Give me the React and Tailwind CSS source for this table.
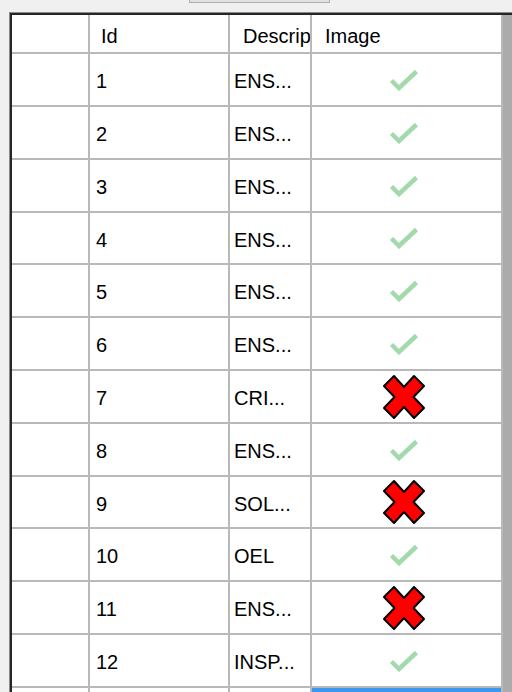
/**
 * Grid snapshot — a WinForms-style DataGridView with an Image column that
 * shows a pale check or a red cross per row.
 */

const rows = [
  { id: 1, desc: 'ENS...', ok: true },
  { id: 2, desc: 'ENS...', ok: true },
  { id: 3, desc: 'ENS...', ok: true },
  { id: 4, desc: 'ENS...', ok: true },
  { id: 5, desc: 'ENS...', ok: true },
  { id: 6, desc: 'ENS...', ok: true },
  { id: 7, desc: 'CRI...', ok: false },
  { id: 8, desc: 'ENS...', ok: true },
  { id: 9, desc: 'SOL...', ok: false },
  { id: 10, desc: 'OEL', ok: true },
  { id: 11, desc: 'ENS...', ok: false },
  { id: 12, desc: 'INSP...', ok: true },
]

const font = { fontFamily: '"Liberation Sans", Arial, sans-serif' }

function Check() {
  return (
    <svg width="30" height="22" viewBox="0 0 30 22" aria-hidden>
      <path
        d="M2.5 11.5 L10 19 L27.5 2.5"
        fill="none"
        stroke="#a3daab"
        strokeWidth="4.5"
        strokeLinecap="butt"
        strokeLinejoin="miter"
      />
    </svg>
  )
}

function Cross() {
  return (
    <svg width="44" height="46" viewBox="0 0 44 46" aria-hidden>
      <polygon
        points="2,12 12,2 22,13 32,2 42,12 31.5,23 42,34 32,44 22,33 12,44 2,34 12.5,23"
        fill="#ff0000"
        stroke="#000"
        strokeWidth="2"
        strokeLinejoin="round"
      />
    </svg>
  )
}

function Cell({ className = '', children }) {
  return (
    <div
      className={[
        'shrink-0 flex items-center overflow-hidden whitespace-nowrap bg-white',
        'border-r-2 border-b-2 border-[#b9b9b9]',
        className,
      ].join(' ')}
    >
      {children}
    </div>
  )
}

export default function App() {
  return (
    <div className="w-[512px] h-[692px] overflow-hidden bg-[#f0f0f0] text-black" style={font}>
      {/* edge of the button sitting above the grid */}
      <div className="ml-[189px] w-[141px] h-[3px] bg-[#e1e1e1] border border-t-0 border-[#adadad]" />

      <div className="mt-[9px] ml-[9px] w-[520px] border-l border-t border-[#8a8a8a]">
        <div className="border-l-2 border-t-2 border-[#262626] bg-[#ababab] h-[700px]">
          {/* header */}
          <div className="flex h-[39px] text-[20px]">
            <Cell className="w-[78px]" />
            <Cell className="w-[140px] pl-[11px] pt-[4px]">Id</Cell>
            <Cell className="w-[82px] pl-[13px] pt-[4px]">Descrip</Cell>
            <Cell className="w-[191px] pl-[13px] pt-[4px]">Image</Cell>
          </div>

          {rows.map((r) => (
            <div
              key={r.id}
              className={['flex text-[20px]', r.id === 4 || r.id === 9 ? 'h-[52px]' : 'h-[53px]'].join(' ')}
            >
              <Cell className="w-[78px]" />
              <Cell className="w-[140px] pl-[6px] pt-[3px]">{r.id}</Cell>
              <Cell className="w-[82px] pl-[4px] pt-[3px]">{r.desc}</Cell>
              <Cell className="w-[191px] justify-center pr-[5px]">
                {r.ok ? <Check /> : <Cross />}
              </Cell>
            </div>
          ))}

          {/* next row, image cell selected */}
          <div className="flex h-[40px]">
            <Cell className="w-[78px]" />
            <Cell className="w-[140px]" />
            <Cell className="w-[82px]" />
            <div className="shrink-0 w-[191px] border-r-2 border-[#b9b9b9] bg-[#3b97ef]" />
          </div>
        </div>
      </div>
    </div>
  )
}
